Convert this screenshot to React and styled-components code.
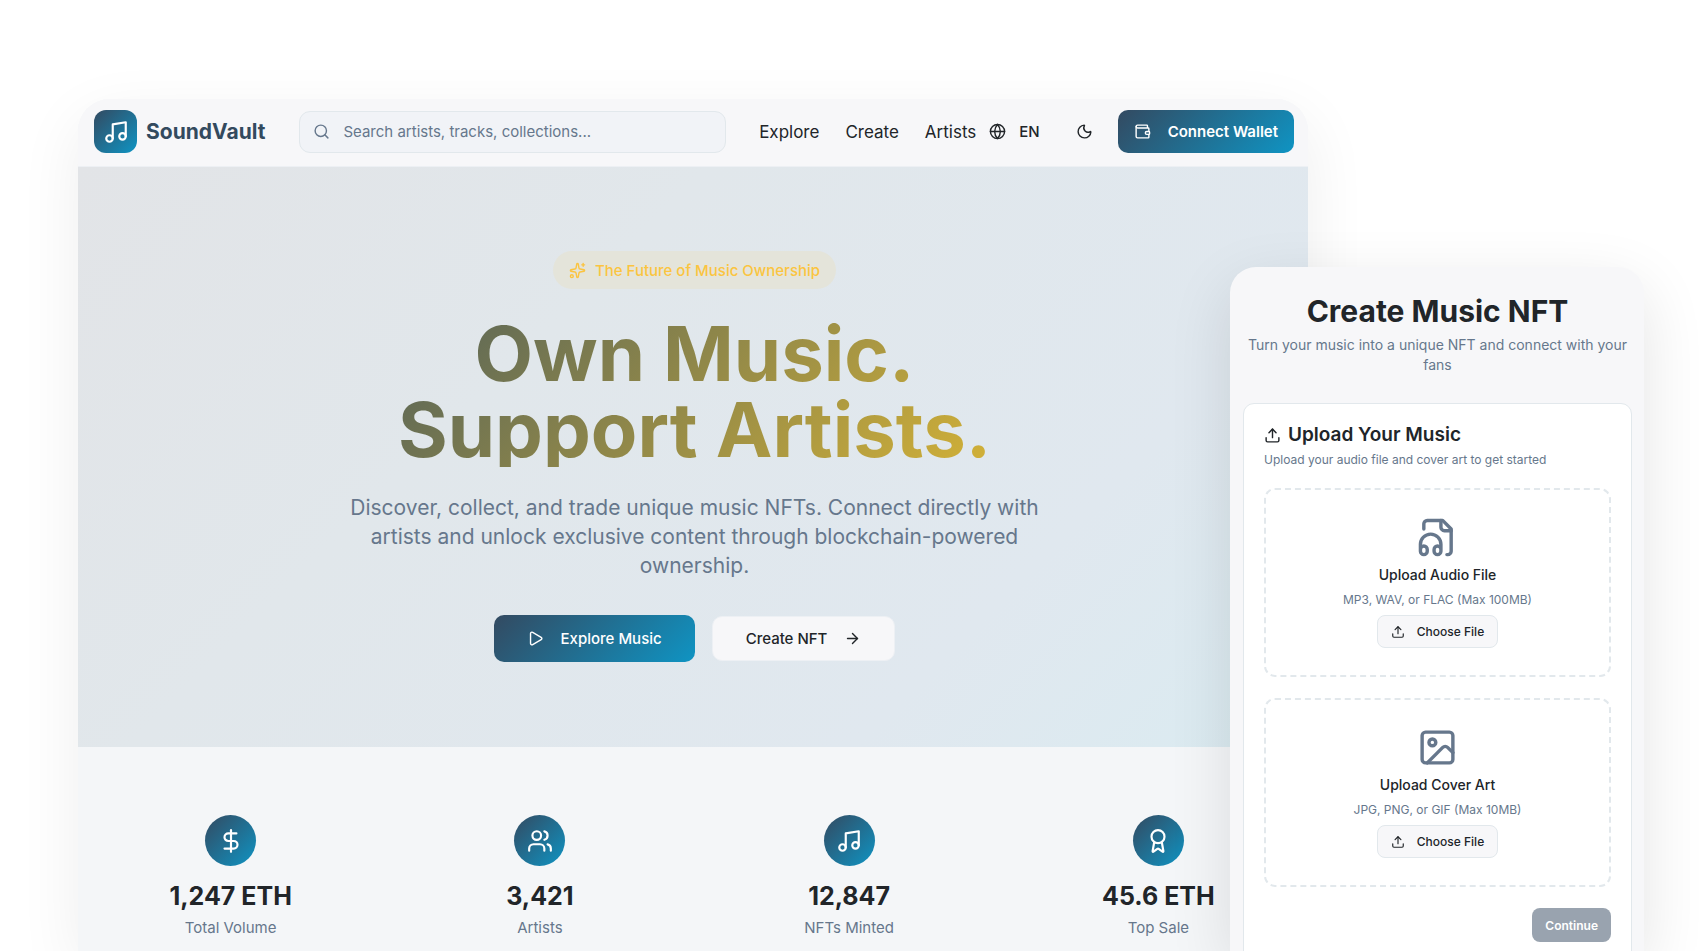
import React from 'react';
import styled, { createGlobalStyle, css } from 'styled-components';
import {
  ArrowRight,
  Award,
  DollarSign,
  Globe,
  Image,
  Moon,
  Music,
  Play,
  Search,
  Sparkles,
  Upload,
  Users,
  Wallet,
} from 'lucide-react';

const ink = '#212529';
const muted = '#66778c';
const surface = '#f7f7f9';
const border = '#e2e8ec';
const brandGradient = 'linear-gradient(135deg, #334a61 0%, #0f94c3 100%)';

const GlobalStyle = createGlobalStyle`
  * {
    box-sizing: border-box;
  }

  body {
    margin: 0;
    background: #fff;
    color: ${ink};
    font-family: Inter, 'Liberation Sans', sans-serif;
    -webkit-font-smoothing: antialiased;
  }

  h1, h2, h3, p {
    margin: 0;
  }

  button, input {
    font-family: inherit;
  }
`;

const Stage = styled.div`
  position: relative;
  display: flex;
  height: 100vh;
  padding: 99px 396px 0 78px;
  overflow: hidden;
`;

const Window = styled.div`
  flex: 1;
  display: flex;
  flex-direction: column;
  min-height: 100%;
  border-radius: 32px 32px 0 0;
  background: #f4f6f8;
  box-shadow: 0 20px 64px rgba(0, 0, 0, 0.07);
`;

const Header = styled.header`
  display: flex;
  align-items: center;
  padding: 11px 14px 13px 16px;
  border-bottom: 1px solid #edf0f4;
  border-radius: 32px 32px 0 0;
  background: ${surface};
`;

const Brand = styled.a`
  display: flex;
  align-items: center;
  gap: 9px;
  margin-right: 34px;
  color: #334a5e;
  font-size: 21px;
  font-weight: 700;
  text-decoration: none;
`;

const BrandMark = styled.span`
  display: flex;
  align-items: center;
  justify-content: center;
  width: 43px;
  height: 43px;
  border-radius: 12px;
  background: ${brandGradient};
  color: #fff;
`;

const SearchBox = styled.label`
  flex: 1;
  display: flex;
  align-items: center;
  gap: 13px;
  height: 42px;
  margin-right: 33px;
  padding: 0 13px;
  border: 1px solid ${border};
  border-radius: 11px;
  background: #f1f3f7;
  color: ${muted};
`;

const SearchInput = styled.input`
  flex: 1;
  min-width: 0;
  padding: 0;
  border: 0;
  outline: 0;
  background: none;
  color: ${ink};
  font-size: 15px;

  &::placeholder {
    color: ${muted};
    opacity: 1;
  }
`;

const Nav = styled.nav`
  display: flex;
  gap: 26px;
  margin-right: 13px;
`;

const NavLink = styled.a`
  color: ${ink};
  font-size: 17px;
  text-decoration: none;
`;

const HeaderButton = styled.button`
  display: flex;
  align-items: center;
  gap: 13px;
  margin-right: ${props => props.$space}px;
  padding: 0;
  border: 0;
  background: none;
  color: ${ink};
  font-size: 15px;
  font-weight: 500;
`;

const Button = styled.button`
  display: inline-flex;
  align-items: center;
  justify-content: center;
  gap: 17px;
  border: 0;
  border-radius: 10px;
  font-weight: 500;
  white-space: nowrap;

  ${props => props.$primary ? css`
    background: ${brandGradient};
    color: #fff;
  ` : css`
    border: 1px solid #edf0f4;
    background: ${surface};
    color: ${ink};
  `}
`;

const WalletButton = styled(Button)`
  height: 43px;
  padding: 0 16px;
  font-size: 15px;
  font-weight: 600;
`;

const HeroButton = styled(Button)`
  height: ${props => props.$primary ? 47 : 45}px;
  padding: 0 33px;
  font-size: 15px;
`;

const SmallButton = styled(Button)`
  gap: 12px;
  height: 33px;
  padding: 0 13px;
  border-color: ${border};
  border-radius: 8px;
  font-size: 12px;
`;

const Hero = styled.section`
  display: flex;
  flex-direction: column;
  align-items: center;
  padding: 84px 62px 85px 65px;
  background: linear-gradient(135deg, #e2e4e7 0%, #e1e7eb 35%, #e0e8ef 75%, #daebf1 100%);
  text-align: center;
`;

const Pill = styled.div`
  display: flex;
  align-items: center;
  gap: 9px;
  height: 38px;
  margin-bottom: 26px;
  padding: 0 16px;
  border-radius: 19px;
  background: #e4e4da;
  color: #fbc440;
  font-size: 15px;
  font-weight: 500;
`;

const Headline = styled.h1`
  width: 100%;
  max-width: 954px;
  margin-bottom: 26px;
  background: linear-gradient(135deg, #375061 0%, #f1c42f 100%);
  background-clip: text;
  -webkit-background-clip: text;
  color: transparent;
  font-size: 76px;
  font-weight: 700;
  line-height: 76px;
`;

const Lead = styled.p`
  max-width: 716px;
  margin-bottom: 35px;
  color: ${muted};
  font-size: 21px;
  line-height: 29px;
`;

const HeroActions = styled.div`
  display: flex;
  align-items: center;
  gap: 17px;
`;

const Stats = styled.section`
  flex: 1;
  display: grid;
  grid-template-columns: repeat(4, 1fr);
  gap: 34px;
  padding: 68px 12px 0 15px;
`;

const Stat = styled.div`
  display: flex;
  flex-direction: column;
  align-items: center;
`;

const StatIcon = styled.div`
  display: flex;
  align-items: center;
  justify-content: center;
  width: 51px;
  height: 51px;
  margin-bottom: 13px;
  border-radius: 50%;
  background: ${brandGradient};
  color: #fff;
`;

const StatValue = styled.div`
  font-size: 25px;
  font-weight: 700;
  line-height: 34px;
`;

const StatLabel = styled.div`
  margin-top: 4px;
  color: ${muted};
  font-size: 15px;
  line-height: 22px;
`;

// Panel floats over the bottom right corner of the window
const Panel = styled.aside`
  position: absolute;
  top: 267px;
  right: 60px;
  bottom: 0;
  width: 414px;
  padding: 26px 12px 0 13px;
  border-radius: 26px 26px 0 0;
  background: ${surface};
  box-shadow: 0 20px 64px rgba(0, 0, 0, 0.11);
`;

const PanelHead = styled.div`
  margin-bottom: 28px;
  text-align: center;
`;

const PanelTitle = styled.h2`
  font-size: 30px;
  font-weight: 700;
  line-height: 36px;
`;

const PanelText = styled.p`
  margin-top: 6px;
  color: ${muted};
  font-size: 14px;
  line-height: 20px;
`;

const Card = styled.form`
  display: flex;
  flex-direction: column;
  height: 600px;
  padding: 18px 20px;
  border: 1px solid ${border};
  border-radius: 11px;
  background: #fff;
`;

const CardTitle = styled.h3`
  display: flex;
  align-items: center;
  gap: 7px;
  font-size: 19px;
  font-weight: 600;
  line-height: 26px;
`;

const CardText = styled.p`
  margin: 3px 0 19px;
  color: ${muted};
  font-size: 12px;
  line-height: 18px;
`;

const DropZone = styled.div`
  display: flex;
  flex-direction: column;
  align-items: center;
  margin-bottom: 21px;
  padding: 27px;
  border: 2px dashed ${border};
  border-radius: 11px;
  color: ${muted};
`;

const DropTitle = styled.p`
  margin-top: 6px;
  color: ${ink};
  font-size: 14px;
  font-weight: 500;
  line-height: 21px;
`;

const DropText = styled.p`
  margin: 6px 0;
  font-size: 12px;
  line-height: 18px;
`;

const ContinueButton = styled.button`
  align-self: flex-end;
  height: 34px;
  padding: 0 13px;
  border: 0;
  border-radius: 8px;
  background: #99a3af;
  color: #fff;
  font-size: 12px;
  font-weight: 600;
`;

const FileHeadphones = ({ size }) => (
  <svg
    width={size}
    height={size}
    viewBox="0 0 24 24"
    fill="none"
    stroke="currentColor"
    strokeWidth="2"
    strokeLinecap="round"
    strokeLinejoin="round"
    aria-hidden="true"
  >
    <path d="M17.5 22h.5a2 2 0 0 0 2-2V7l-5-5H6a2 2 0 0 0-2 2v3" />
    <path d="M14 2v4a2 2 0 0 0 2 2h4" />
    <path d="M2 19a2 2 0 1 1 4 0v1a2 2 0 1 1-4 0v-4a6 6 0 0 1 12 0v4a2 2 0 1 1-4 0v-1a2 2 0 1 1 4 0" />
  </svg>
);

const stats = [
  { icon: DollarSign, value: '1,247 ETH', label: 'Total Volume' },
  { icon: Users, value: '3,421', label: 'Artists' },
  { icon: Music, value: '12,847', label: 'NFTs Minted' },
  { icon: Award, value: '45.6 ETH', label: 'Top Sale' },
];

const uploads = [
  { icon: FileHeadphones, title: 'Upload Audio File', hint: 'MP3, WAV, or FLAC (Max 100MB)' },
  { icon: Image, title: 'Upload Cover Art', hint: 'JPG, PNG, or GIF (Max 10MB)' },
];

const App = () => (
  <>
    <GlobalStyle />
    <Stage>
      <Window>
        <Header>
          <Brand href="#">
            <BrandMark><Music size={26} /></BrandMark>
            SoundVault
          </Brand>
          <SearchBox>
            <Search size={17} />
            <SearchInput
              type="search"
              aria-label="Search"
              placeholder="Search artists, tracks, collections..."
            />
          </SearchBox>
          <Nav>
            <NavLink href="#explore">Explore</NavLink>
            <NavLink href="#create">Create</NavLink>
            <NavLink href="#artists">Artists</NavLink>
          </Nav>
          <HeaderButton type="button" $space={36}><Globe size={17} />EN</HeaderButton>
          <HeaderButton type="button" $space={25} aria-label="Dark mode"><Moon size={17} /></HeaderButton>
          <WalletButton type="button" $primary><Wallet size={17} />Connect Wallet</WalletButton>
        </Header>

        <Hero>
          <Pill><Sparkles size={17} />The Future of Music Ownership</Pill>
          <Headline>Own Music.<br />Support Artists.</Headline>
          <Lead>
            Discover, collect, and trade unique music NFTs. Connect directly with artists
            and unlock exclusive content through blockchain-powered ownership.
          </Lead>
          <HeroActions>
            <HeroButton type="button" $primary><Play size={17} />Explore Music</HeroButton>
            <HeroButton type="button">Create NFT<ArrowRight size={17} /></HeroButton>
          </HeroActions>
        </Hero>

        <Stats>
          {stats.map(({ icon: Icon, value, label }) => (
            <Stat key={label}>
              <StatIcon><Icon size={26} /></StatIcon>
              <StatValue>{value}</StatValue>
              <StatLabel>{label}</StatLabel>
            </Stat>
          ))}
        </Stats>
      </Window>

      <Panel>
        <PanelHead>
          <PanelTitle>Create Music NFT</PanelTitle>
          <PanelText>Turn your music into a unique NFT and connect with your fans</PanelText>
        </PanelHead>
        <Card>
          <CardTitle><Upload size={17} />Upload Your Music</CardTitle>
          <CardText>Upload your audio file and cover art to get started</CardText>
          {uploads.map(({ icon: Icon, title, hint }) => (
            <DropZone key={title}>
              <Icon size={41} />
              <DropTitle>{title}</DropTitle>
              <DropText>{hint}</DropText>
              <SmallButton type="button"><Upload size={14} />Choose File</SmallButton>
            </DropZone>
          ))}
          <ContinueButton type="button" disabled>Continue</ContinueButton>
        </Card>
      </Panel>
    </Stage>
  </>
);

export default App;
